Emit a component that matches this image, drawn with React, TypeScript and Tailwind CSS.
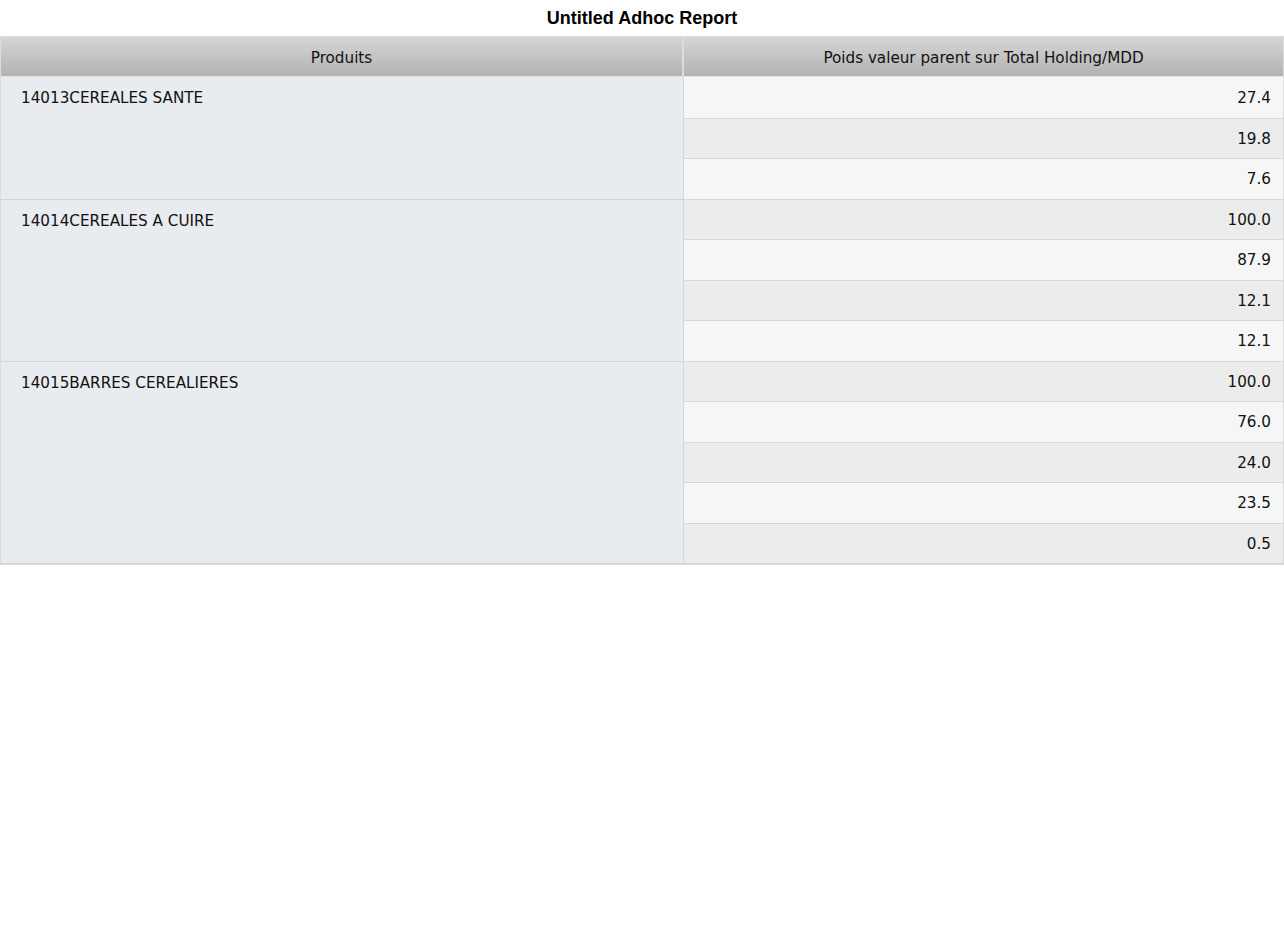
const GROUPS: { name: string; values: string[] }[] = [
  { name: '14013CEREALES SANTE', values: ['27.4', '19.8', '7.6'] },
  { name: '14014CEREALES A CUIRE', values: ['100.0', '87.9', '12.1', '12.1'] },
  { name: '14015BARRES CEREALIERES', values: ['100.0', '76.0', '24.0', '23.5', '0.5'] },
]

export default function App() {
  let rowIndex = 0
  return (
    <div className="w-[1284px] bg-white text-black">
      <h1 className="h-[36px] pt-[7px] text-center text-[18px] leading-[22px] font-bold font-['Liberation_Sans',Arial,sans-serif]">
        Untitled Adhoc Report
      </h1>
      <div className="border border-[#dcdcdc] border-b-2 border-b-[#d6d6d6] font-['DejaVu_Sans',Verdana,sans-serif] text-[15.2px] text-[#111]">
        {/* header */}
        <div className="flex h-[40px] bg-gradient-to-b from-[#d6d6d6] to-[#b2b2b2] border-b border-[#e2e2e2]">
          <div className="w-[683px] flex items-center justify-center pt-[3px] border-r-2 border-[#dcdcdc]">Produits</div>
          <div className="flex-1 flex items-center justify-center pt-[3px]">Poids valeur parent sur Total Holding/MDD</div>
        </div>
        {GROUPS.map((g, gi) => (
          <div key={g.name} className="flex">
            <div className={`w-[683px] bg-[#e8ebf0] border-r border-[#d6d6d6] pl-[20px] pt-[10px] ${gi > 0 ? 'border-t border-t-[#d4d4d4]' : ''}`}>
              <span className="leading-[20px]">{g.name}</span>
            </div>
            <div className="flex-1 flex flex-col">
              {g.values.map((v, i) => {
                const odd = rowIndex++ % 2 === 1
                return (
                  <div
                    key={i}
                    className={`h-[40.5px] flex items-center justify-end pr-[12px] pt-[2px] ${i > 0 || gi > 0 ? 'border-t border-[#d8d8d8]' : ''} ${odd ? 'bg-[#ececed]' : 'bg-[#f6f6f6]'}`}
                  >
                    {v}
                  </div>
                )
              })}
            </div>
          </div>
        ))}
      </div>
    </div>
  )
}
